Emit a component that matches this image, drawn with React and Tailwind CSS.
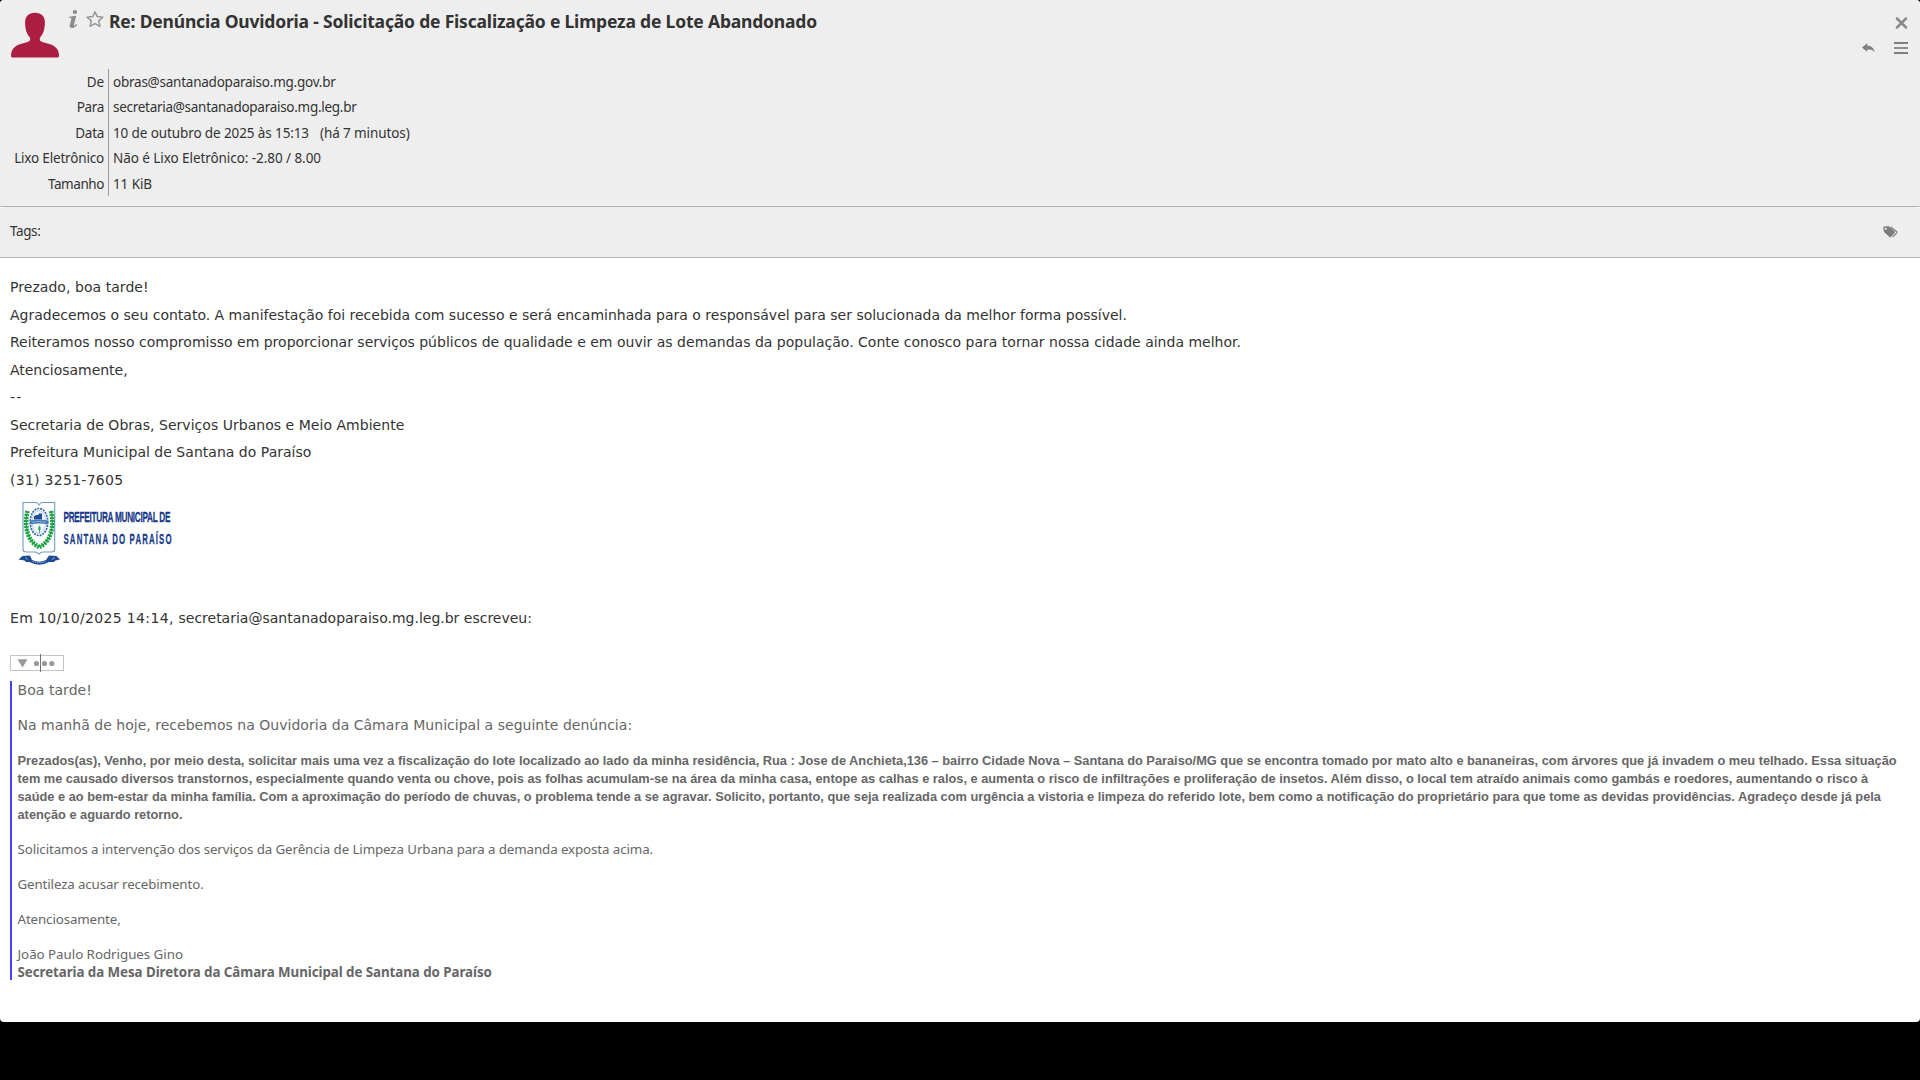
import React from "react";

const HEADERS = [
  { label: "De", labelTrack: "tracking-[-0.1px]", parts: [["obras@santanadoparaiso.mg.gov.br", "tracking-[-0.24px]"]] },
  { label: "Para", labelTrack: "tracking-[-0.35px]", parts: [["secretaria@santanadoparaiso.mg.leg.br", "tracking-[-0.28px]"]] },
  {
    label: "Data",
    labelTrack: "tracking-[-0.3px]",
    parts: [
      ["10 de outubro de 2025 às 15:13", "tracking-[-0.11px]"],
      ["(há 7 minutos)", "tracking-[-0.1px] ml-[11px]"],
    ],
  },
  { label: "Lixo Eletrônico", labelTrack: "tracking-[-0.18px]", parts: [["Não é Lixo Eletrônico: -2.80 / 8.00", "tracking-[-0.065px]"]] },
  { label: "Tamanho", labelTrack: "tracking-[-0.42px]", parts: [["11 KiB", "tracking-[-0.1px]"]] },
];

const BODY = [
  ["Prezado, boa tarde!", "tracking-[0.05px]"],
  ["Agradecemos o seu contato. A manifestação foi recebida com sucesso e será encaminhada para o responsável para ser solucionada da melhor forma possível.", "tracking-[-0.005px]"],
  ["Reiteramos nosso compromisso em proporcionar serviços públicos de qualidade e em ouvir as demandas da população. Conte conosco para tornar nossa cidade ainda melhor.", "tracking-[0.002px]"],
  ["Atenciosamente,", "tracking-[-0.03px]"],
  ["--", "tracking-[1.2px]"],
  ["Secretaria de Obras, Serviços Urbanos e Meio Ambiente", "tracking-[0.03px]"],
  ["Prefeitura Municipal de Santana do Paraíso", "tracking-[0.02px]"],
  ["(31) 3251-7605", "tracking-[0.28px]"],
];

const COMPLAINT = [
  "Prezados(as), Venho, por meio desta, solicitar mais uma vez a fiscalização do lote localizado ao lado da minha residência, Rua : Jose de Anchieta,136 – bairro Cidade Nova – Santana do Paraiso/MG que se encontra tomado por mato alto e bananeiras, com árvores que já invadem o meu telhado. Essa situação",
  "tem me causado diversos transtornos, especialmente quando venta ou chove, pois as folhas acumulam-se na área da minha casa, entope as calhas e ralos, e aumenta o risco de infiltrações e proliferação de insetos. Além disso, o local tem atraído animais como gambás e roedores, aumentando o risco à",
  "saúde e ao bem-estar da minha família. Com a aproximação do período de chuvas, o problema tende a se agravar. Solicito, portanto, que seja realizada com urgência a vistoria e limpeza do referido lote, bem como a notificação do proprietário para que tome as devidas providências. Agradeço desde já pela",
  "atenção e aguardo retorno.",
];

function Avatar() {
  return (
    <svg className="ml-[11px] mt-[12px] h-[46px] w-[48px] shrink-0" viewBox="0 0 48 46" fill="#aa1e42">
      <path d="M24 .8c6.200 0 9.900 3.500 9.900 9.600 0 7-2 11.800-4.600 14.800-.8 1-.6 3.300.2 3.900 1 .9 3.300 1.400 7 2.500C44.500 33.700 48 37.200 48 43.800c0 1.200-.3 1.700-1.300 1.700H1.400C.3 45.500.1 45 .1 43.800.1 37.200 3.500 33.700 11.500 31.600c3.700-1.100 6-1.600 7-2.500.8-.6 1-2.900.2-3.900-2.600-3-4.600-7.800-4.600-14.800C14.100 4.300 17.800.8 24 .8z" />
    </svg>
  );
}

function InfoIcon() {
  return (
    <svg className="ml-[9px] mt-[9px] h-[20px] w-[11px] shrink-0" viewBox="0 0 11 20" fill="#8c8c8c">
      <ellipse cx="6.900" cy="3" rx="2.200" ry="2.100" />
      <path d="M1.200 7.700 8.200 6.800 6 15.800c-.2.900.1 1.200.7.800.4-.3 1-1 1.500-1.700l.9.500c-1.200 2.200-2.900 3.500-4.800 3.500-2 0-3-1.100-2.600-2.700L3.300 9.900c.2-.8-.2-1.200-1-1.200H.9z" />
    </svg>
  );
}

function StarIcon() {
  return (
    <svg className="ml-[7px] mt-[10px] h-[18px] w-[18px] shrink-0" viewBox="0 0 18 18" fill="none" stroke="#969696" strokeWidth="1.500" strokeLinejoin="round">
      <path d="M9 1.800 11.200 6.600 16.900 7.200 12.700 10.900 13.900 16.400 9 13.600 4.100 16.400 5.300 10.900 1.100 7.200 6.800 6.600z" />
    </svg>
  );
}

function CloseIcon() {
  return (
    <svg className="h-[12px] w-[13px]" viewBox="0 0 13 12" stroke="#8a8a8a" strokeWidth="2.500" strokeLinecap="round">
      <path d="M2 1.500 11 10.500M11 1.500 2 10.500" />
    </svg>
  );
}

function ReplyIcon() {
  return (
    <svg className="h-[10px] w-[13px]" viewBox="0 0 13 10" fill="#808080">
      <path d="M0 4.500 5.200.2V2.400C9.300 2.600 12 5 12.600 9.200 10.900 7 8.700 6.400 5.200 6.600V8.900z" />
    </svg>
  );
}

function MenuIcon() {
  return (
    <div className="flex h-[12px] w-[14px] flex-col justify-between">
      <div className="h-[2px] bg-[#7f7f7f]" />
      <div className="h-[2px] bg-[#8f8f8f]" />
      <div className="h-[2px] bg-[#7f7f7f]" />
    </div>
  );
}

function TagsIcon() {
  return (
    <svg className="h-[12px] w-[15px]" viewBox="0 0 15 12">
      <path fill="#7d7d7d" fillRule="evenodd" d="M1 .6 5.300.3C5.900.3 6.400.5 6.900.9L11.500 5.300c.5.500.5 1 .1 1.600L8 10.900c-.5.500-1.100.5-1.600.1L1.500 6.600C1 6.200.8 5.700.7 5.100L.3 1.400C.2.900.5.600 1 .6zM2.700 1.800a1 1 0 1 0 0 2.100 1 1 0 0 0 0-2.100z" />
      <path fill="none" stroke="#7d7d7d" strokeWidth="1.200" d="M7.800.9 13.400 5.500c.6.500.6 1 .1 1.600L9.700 11.200" />
    </svg>
  );
}

function CityLogo() {
  return (
    <svg className="ml-[8px] mt-[6px] block h-[68px] w-[156px]" viewBox="18 500 156 68">
      <path d="M23 502.500H36q1.500 0 3 2.500 1.500-2.500 3-2.500H54.700V549q0 3-3 3H43q-2.500 0-4 2.200-1.500-2.200-4-2.200H26q-3 0-3-3z" fill="#fff" stroke="#6f9bc8" strokeWidth="1.100" />
      <g fill="none" stroke="#1fa345" strokeWidth="4.600" strokeDasharray="2 1">
        <path d="M27.500 511C24 526 27 541 39 547" />
        <path d="M51 511C54.500 526 51.500 541 39.500 547" />
      </g>
      <g fill="none" stroke="#1fa345" strokeWidth="1.200">
        <path d="M27.500 511C24 526 27 541 39 547" />
        <path d="M51 511C54.500 526 51.500 541 39.500 547" />
      </g>
      <ellipse cx="39" cy="522" rx="8.800" ry="13.500" fill="#fff" stroke="#2f66a8" strokeWidth="1.700" strokeDasharray="2 1" />
      <ellipse cx="39" cy="522" rx="6.800" ry="11.500" fill="#f2f6fb" stroke="#8fb0d4" strokeWidth=".6" />
      <path d="M34 519.500V516.500l2-1.500h2.500v-1.500H42V519.500z" fill="#1c4f96" />
      <path d="M30 520.500Q39 518.500 48 520.500V524.500Q39 522.500 30 524.500z" fill="#4a7cb6" />
      <path d="M32.500 522.300Q39 521 45.500 522.300" fill="none" stroke="#c6d8ec" strokeWidth=".8" strokeDasharray="1.500 .8" />
      <path d="M39.500 525.500q2.300 3 0 5.500-2.300-2.500 0-5.500z" fill="#1fa345" />
      <path d="M39.500 530V533" stroke="#1fa345" strokeWidth=".8" />
      <path d="M18.500 559.500 22.500 556 30 555.500 32 560Q39 563.500 46 560L49 555.500 56.500 556 60 559.500 55.500 560.500 54 562 49 562Q39 567.500 29.500 562L26 562 24.500 560.500z" fill="#1c4a94" />
      <path d="M32.500 561.500Q39 564 45.500 561.500" fill="none" stroke="#9cb8da" strokeWidth="1" strokeDasharray="1.500 .8" />
      <path d="M25.500 557.500 27.500 559.500M52 559.500 54.500 557.500" stroke="#c6d8ec" strokeWidth=".8" />
      <g fill="#14388a" stroke="#14388a" strokeWidth=".25" className='font-["Liberation_Sans",sans-serif] font-bold'>
        <text x="0" y="0" transform="translate(63.500 521.800) scale(.58 1)" fontSize="14.200" textLength="184.500" lengthAdjust="spacing">PREFEITURA MUNICIPAL DE</text>
        <text x="0" y="0" transform="translate(63.500 544.300) scale(.56 1)" fontSize="14" textLength="193" lengthAdjust="spacing">SANTANA DO PARAÍSO</text>
      </g>
    </svg>
  );
}

function QuoteToggle() {
  return (
    <svg className="ml-[10px] block h-[18px] w-[54px]" viewBox="0 0 54 18">
      <rect x=".5" y="1.500" width="53" height="15" fill="#fff" stroke="#c4c4c4" />
      <path d="M7.500 5.300H17.500L12.500 13.500z" fill="#999" />
      <circle cx="26.500" cy="9.500" r="2.600" fill="#999" />
      <circle cx="34.500" cy="9.500" r="2.600" fill="#999" />
      <circle cx="41.800" cy="9.500" r="2.600" fill="#999" />
      <path d="M30.500 0V18" stroke="#777" />
    </svg>
  );
}

export default function App() {
  return (
    <div className='h-[1080px] w-[1920px] overflow-hidden bg-black font-["Noto_Sans",sans-serif] text-[13.500px] text-[#333]'>
      <div className="h-[1022px] overflow-hidden rounded-[4px] bg-white whitespace-nowrap">
        <header className="flex h-[207px] flex-col border-b border-[#b5b5b5] bg-[#eee]">
          <div className="flex h-[69px] items-start">
            <Avatar />
            <InfoIcon />
            <StarIcon />
            <h1 className="ml-[5px] flex-1 text-[17.500px] leading-[42px] font-bold tracking-[-0.188px]">
              Re: Denúncia Ouvidoria - Solicitação de Fiscalização e Limpeza de Lote Abandonado
            </h1>
            <div className="mr-[12px] flex flex-col items-end gap-[13px] pt-[17px]">
              <CloseIcon />
              <div className="flex items-center gap-[19px]">
                <ReplyIcon />
                <MenuIcon />
              </div>
            </div>
          </div>
          <div className="flex flex-col">
            {HEADERS.map((h) => (
              <div key={h.label} className="flex h-[25.400px] leading-[27.400px]">
                <div className="w-[109px] border-r border-[#999] pr-[4px] text-right">
                  <span className={h.labelTrack}>{h.label}</span>
                </div>
                <div className="flex pl-[4px]">
                  {h.parts.map(([text, track]) => (
                    <span key={text} className={track}>{text}</span>
                  ))}
                </div>
              </div>
            ))}
          </div>
        </header>

        <div className="flex h-[51px] items-center justify-between rounded-t-[4px] border-b border-[#b5b5b5] bg-[#eee] pr-[22px] pl-[10px]">
          <span className="-mt-[2px] tracking-[-0.4px]">Tags:</span>
          <TagsIcon />
        </div>

        <main>
          <div className='h-[396px] pt-[16.100px] pl-[10px] font-["DejaVu_Sans",sans-serif] text-[14px]'>
            {BODY.map(([text, track]) => (
              <p key={text} className="h-[27.570px] leading-[27.570px]">
                <span className={track}>{text}</span>
              </p>
            ))}
            <div className="-mt-[0.700px] h-[111.100px] pt-[0.040px]">
              <CityLogo />
            </div>
            <p className="h-[27.570px] leading-[27.570px]">
              <span className="tracking-[0.34px]">Em 10/10/2025 14:14, </span>
              <span>secretaria@santanadoparaiso.mg.leg.br escreveu:</span>
            </p>
          </div>
          <QuoteToggle />
          <div className="pt-[9px] pl-[10px]">
            <blockquote className="h-[299px] border-l-2 border-[#4040ff] pt-px pl-[5.500px] text-[13.333px] leading-[17.500px] text-[#666]">
              <p className='mb-[17.500px] font-["DejaVu_Sans",sans-serif] text-[14px] tracking-[0.05px]'>Boa tarde!</p>
              <p className='mb-[17.500px] font-["DejaVu_Sans",sans-serif] text-[14px] tracking-[0.025px]'>
                Na manhã de hoje, recebemos na Ouvidoria da Câmara Municipal a seguinte denúncia:
              </p>
              <div className='mb-[17.400px] font-["Liberation_Sans",sans-serif] text-[12.800px] leading-[17.900px] font-bold'>
                {COMPLAINT.map((line) => (
                  <p key={line}>{line}</p>
                ))}
              </div>
              <p className="mb-[17.500px] tracking-[-0.103px]">Solicitamos a intervenção dos serviços da Gerência de Limpeza Urbana para a demanda exposta acima.</p>
              <p className="mb-[17.500px] tracking-[-0.125px]">Gentileza acusar recebimento.</p>
              <p className="mb-[17.500px] tracking-[-0.12px]">Atenciosamente,</p>
              <p className="tracking-[-0.03px]">João Paulo Rodrigues Gino</p>
              <p className="font-bold tracking-[-0.056px]">Secretaria da Mesa Diretora da Câmara Municipal de Santana do Paraíso</p>
            </blockquote>
          </div>
        </main>
      </div>
    </div>
  );
}
